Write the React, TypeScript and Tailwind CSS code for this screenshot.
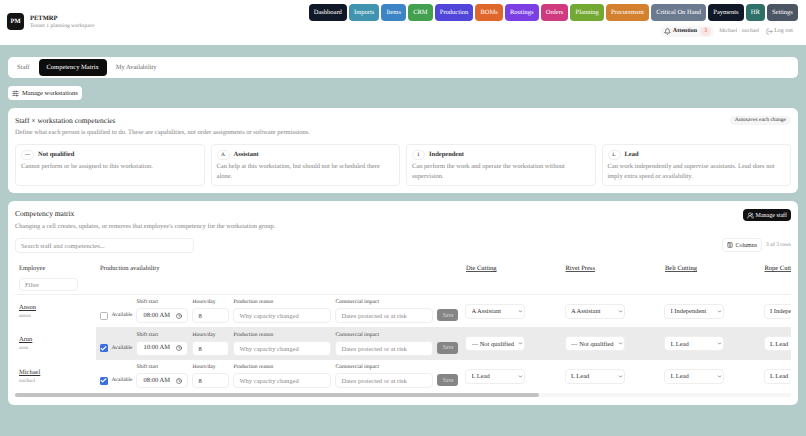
import { Bell, Check, ChevronDown, Clock, Columns3, LogOut, SlidersHorizontal, UsersRound } from "lucide-react"

const navItems = [
  { label: "Dashboard", cls: "bg-[#111827]" },
  { label: "Imports", cls: "bg-[#4194b0]" },
  { label: "Items", cls: "bg-[#3d84c6]" },
  { label: "CRM", cls: "bg-[#43a04f]" },
  { label: "Production", cls: "bg-[#5046d9]" },
  { label: "BOMs", cls: "bg-[#e0672b]" },
  { label: "Routings", cls: "bg-[#7c3fe4]" },
  { label: "Orders", cls: "bg-[#cf3b7e]" },
  { label: "Planning", cls: "bg-[#73a832]" },
  { label: "Procurement", cls: "bg-[#d3802f]" },
  { label: "Critical On Hand", cls: "bg-[#6b7a8f]" },
  { label: "Payments", cls: "bg-[#111827]" },
  { label: "HR", cls: "bg-[#2f7169]" },
  { label: "Settings", cls: "bg-[#4b5563]" },
]

const levels = [
  { mark: "—", name: "Not qualified", text: "Cannot perform or be assigned to this workstation." },
  { mark: "A", name: "Assistant", text: "Can help at this workstation, but should not be scheduled there alone." },
  { mark: "I", name: "Independent", text: "Can perform the work and operate the workstation without supervision." },
  { mark: "L", name: "Lead", text: "Can work independently and supervise assistants. Lead does not imply extra speed or availability." },
]

const options = ["— Not qualified", "A Assistant", "I Independent", "L Lead"]
const groups = ["Die Cutting", "Rivet Press", "Belt Cutting", "Rope Cutting"]

const staff = [
  { name: "Anson", login: "anson", available: false, start: "08:00 AM", levels: ["A Assistant", "A Assistant", "I Independent", "I Independent"] },
  { name: "Arun", login: "arun", available: true, start: "10:00 AM", levels: ["— Not qualified", "— Not qualified", "L Lead", "L Lead"] },
  { name: "Michael", login: "michael", available: true, start: "08:00 AM", levels: ["L Lead", "L Lead", "L Lead", "L Lead"] },
]

const inputCls = "h-[15px] rounded-[4px] border border-[#eeeeee] bg-white px-[5px] text-[6.5px] text-[#333333] outline-none placeholder:text-[#8a8a8a]"

function Field({ label, children }: { label: string; children: React.ReactNode }) {
  return (
    <div className="flex flex-col gap-[2px]">
      <span className="text-[5.5px] leading-[7px] text-[#444444]">{label}</span>
      {children}
    </div>
  )
}

export default function App() {
  return (
    <div className="min-h-screen bg-[#b3ccc9] font-['Liberation_Serif',serif] text-[#1a1a1a] antialiased [text-rendering:geometricPrecision]">
      <header className="flex h-[45px] justify-between bg-white pl-[7px] pr-[8px] pt-[4px]">
        <div className="mt-[8px] flex items-center gap-[6px] self-start pt-[1px]">
          <div className="flex h-[17px] w-[17px] items-center justify-center rounded-[4px] bg-[#141414] text-[6.5px] font-bold text-white">PM</div>
          <div>
            <div className="text-[6.5px] font-bold leading-[9px]">PETMRP</div>
            <div className="text-[5.5px] leading-[7px] text-[#8a8a8a]">Tenant 1 planning workspace</div>
          </div>
        </div>
        <div className="flex flex-col items-end">
          <nav className="flex gap-[2px]">
            {navItems.map((item) => (
              <a key={item.label} className={`flex h-[17px] items-center rounded-[4px] px-[5.1px] text-[6.5px] text-white ${item.cls}`}>
                {item.label}
              </a>
            ))}
          </nav>
          <div className="mt-[4.5px] flex items-center pr-[5px] text-[5.5px] text-[#8a8a8a]">
            <div className="flex h-[11px] items-center gap-[2px] rounded-full bg-[#f7f7f7] px-[3px] text-[#222222]">
              <Bell className="h-[7px] w-[7px]" />
              <span className="text-[6px] font-bold">Attention</span>
              <span className="ml-[1px] flex h-[9px] w-[11px] items-center justify-center rounded-full bg-[#fde4e4] text-[#c0504d]">3</span>
            </div>
            <span className="ml-[5px]">Michael · michael</span>
            <span className="ml-[7px] flex items-center gap-[1px] text-[6px]">
              <LogOut className="h-[7px] w-[7px]" />
              Log out
            </span>
          </div>
        </div>
      </header>

      <main className="flex flex-col gap-[8px] px-[8px] pt-[12px]">
        <div className="flex h-[21px] items-center rounded-[5px] bg-white pl-[2px] text-[6.5px] text-[#6b6b6b]">
          <span className="px-[7px]">Staff</span>
          <span className="ml-[2px] flex h-[17px] items-center rounded-[4px] bg-[#0d0d0d] px-[8px] text-white">Competency Matrix</span>
          <span className="px-[9px]">My Availability</span>
        </div>

        <div>
          <button className="flex h-[14px] items-center gap-[3px] rounded-[4px] bg-white px-[4px] text-[6.5px] text-[#222222]">
            <SlidersHorizontal className="h-[7px] w-[7px]" />
            Manage workstations
          </button>
        </div>

        <section className="rounded-[6px] bg-white p-[7px]">
          <div className="flex items-start justify-between">
            <div>
              <h2 className="text-[7.5px] font-normal leading-[11px]">Staff × workstation competencies</h2>
              <p className="mt-[2px] text-[6.5px] leading-[9px] text-[#858585]">Define what each person is qualified to do. These are capabilities, not order assignments or software permissions.</p>
            </div>
            <span className="mt-[1px] rounded-full bg-[#f5f5f5] px-[5px] py-[1px] text-[5.5px] leading-[7px] text-[#333333]">Autosaves each change</span>
          </div>
          <div className="mt-[7px] grid grid-cols-4 gap-[6px]">
            {levels.map((l) => (
              <div key={l.name} className="h-[42px] rounded-[4px] border border-[#eeeeee] px-[5px] pt-[5px]">
                <div className="flex items-center gap-[4px]">
                  <span className="flex h-[10px] w-[13px] items-center justify-center rounded-full border border-[#eeeeee] text-[5.5px]">{l.mark}</span>
                  <span className="text-[6.5px] font-bold leading-[10px] text-[#333333]">{l.name}</span>
                </div>
                <p className="mt-[1.5px] text-[6.5px] leading-[10px] text-[#858585]">{l.text}</p>
              </div>
            ))}
          </div>
        </section>

        <section className="rounded-[6px] bg-white px-[7px] pb-[8px] pt-[7px]">
          <div className="flex items-start justify-between">
            <div>
              <h2 className="text-[7.5px] font-normal leading-[11px]">Competency matrix</h2>
              <p className="mt-[2.5px] text-[6.5px] leading-[9px] text-[#858585]">Changing a cell creates, updates, or removes that employee's competency for the workstation group.</p>
            </div>
            <button className="mt-[1px] flex h-[12px] items-center gap-[1.5px] rounded-[4px] bg-[#111111] px-[4px] text-[6px] text-white">
              <UsersRound className="h-[7px] w-[7px]" />
              Manage staff
            </button>
          </div>

          <div className="mt-[7px] flex items-center justify-between">
            <input className={`${inputCls} w-[179px]`} placeholder="Search staff and competencies..." />
            <div className="flex h-[14px] items-center gap-[4px]">
              <button className="flex h-[13.5px] items-center gap-[2px] rounded-[4px] border border-[#eeeeee] px-[4px] text-[6px] text-[#333333]">
                <Columns3 className="h-[6px] w-[6px]" />
                Columns
              </button>
              <span className="flex h-[14px] items-center whitespace-nowrap text-[5.5px] text-[#8a8a8a]">3 of 3 rows</span>
            </div>
          </div>

          <div className="mt-[5.5px] overflow-x-hidden">
            <div className="w-[1149px]">
              <div className="flex h-[36.5px] border-b border-[#f0f0f0] text-[6.5px]">
                <div className="w-[84px] shrink-0 pl-[4px] pt-[6px]">
                  <div className="leading-[9px] text-[#333333]">Employee</div>
                  <input className={`${inputCls} mt-[5px] !h-[13px] w-[59px]`} placeholder="Filter" />
                </div>
                <div className="w-[366px] shrink-0 pl-[1px] pt-[6px] leading-[9px] text-[#333333]">Production availability</div>
                {groups.map((g) => (
                  <div key={g} className="w-[99.5px] shrink-0 pl-[1px] pt-[6px] leading-[9px]">
                    <span className="underline decoration-[#555555] underline-offset-1">{g}</span>
                  </div>
                ))}
              </div>
              {staff.map((s, i) => (
                <div key={s.login} className={`flex h-[32.5px] ${i === 1 ? "bg-[#ebebeb]" : ""}`}>
                  <div className="w-[81px] shrink-0 bg-white pl-[4px] pt-[8px]">
                    <div className="text-[6.5px] leading-[9px] text-[#333333] underline underline-offset-1">{s.name}</div>
                    <div className="mt-[1px] text-[5px] leading-[7px] text-[#8a8a8a]">{s.login}</div>
                  </div>
                  <div className="flex w-[369px] shrink-0 items-end gap-[4px] pb-[4px] pl-[3.5px]">
                    <div className="flex h-[15px] items-center gap-[4px] text-[5.5px] text-[#444444]">
                      {s.available ? (
                        <span className="flex h-[8px] w-[8px] items-center justify-center rounded-[1.5px] bg-[#3b6fe0]">
                          <Check className="h-[7px] w-[7px] text-white" strokeWidth={4} />
                        </span>
                      ) : (
                        <span className="h-[8px] w-[8px] rounded-[1.5px] border border-[#b5b5b5] bg-white" />
                      )}
                      Available
                    </div>
                    <Field label="Shift start">
                      <div className={`${inputCls} flex w-[52px] items-center justify-between`}>
                        <span className="pl-[1px]">{s.start}</span>
                        <Clock className="h-[6px] w-[6px] text-[#222222]" />
                      </div>
                    </Field>
                    <Field label="Hours/day">
                      <input defaultValue="8" className={`${inputCls} w-[37px]`} />
                    </Field>
                    <Field label="Production reason">
                      <input className={`${inputCls} w-[98px]`} placeholder="Why capacity changed" />
                    </Field>
                    <Field label="Commercial impact">
                      <input className={`${inputCls} w-[98px]`} placeholder="Dates protected or at risk" />
                    </Field>
                    <button className="mb-[2px] flex h-[12px] w-[21px] items-center justify-center rounded-[3px] bg-[#858585] text-[5.5px] text-[#dddddd]">Save</button>
                  </div>
                  {s.levels.map((lv, j) => (
                    <div key={j} className="w-[99.5px] shrink-0 pt-[9px]">
                      <div className="relative w-[60px]">
                        <select defaultValue={lv} className="block h-[15px] w-full appearance-none rounded-[4px] border border-[#eeeeee] bg-white px-[5.5px] text-[6.5px] text-[#333333]">
                          {options.map((o) => (
                            <option key={o}>{o}</option>
                          ))}
                        </select>
                        <ChevronDown className="absolute right-[2px] top-[5px] h-[5px] w-[5px] text-[#555555]" strokeWidth={3} />
                      </div>
                    </div>
                  ))}
                </div>
              ))}
            </div>
          </div>
          <div className="mt-[1px] h-[4px] bg-[#f6f6f6]">
            <div className="h-full w-[524px] rounded-full bg-[#c2c2c2]" />
          </div>
        </section>
      </main>
    </div>
  )
}
